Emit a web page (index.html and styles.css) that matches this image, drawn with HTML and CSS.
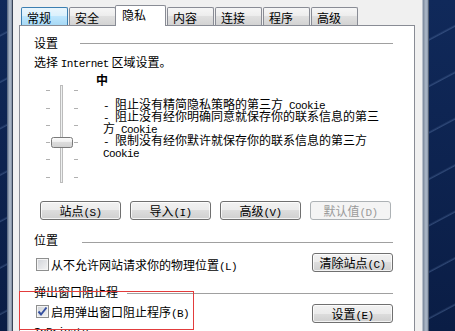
FILE: index.html
```html
<!DOCTYPE html>
<html lang="zh-CN">
<head>
  <meta charset="UTF-8" />
  <meta name="viewport" content="width=device-width, initial-scale=1.0" />
  <title>Internet 选项 - 隐私</title>
  <link rel="stylesheet" href="styles.css">
</head>
<body>

  <div class="frame">
    <div class="client">

      <div class="tabs">
        <div class="tab hot">常规</div>
        <div class="tab">安全</div>
        <div class="tab active">隐私</div>
        <div class="tab">内容</div>
        <div class="tab">连接</div>
        <div class="tab">程序</div>
        <div class="tab">高级</div>
      </div>

      <div class="pane">
        <div class="group g-set"><span>设置</span><i class="rule"></i></div>
        <p class="hint">选择 <span class="lat">Internet</span> 区域设置。</p>
        <div class="level">中</div>

        <div class="privacy">
          <svg class="slider" width="36" height="98" viewBox="0 0 36 98">
            <defs>
              <linearGradient id="thumb" x1="0" y1="0" x2="0" y2="1">
                <stop offset="0" stop-color="#fdfdfd"/>
                <stop offset="0.5" stop-color="#ececec"/>
                <stop offset="0.5" stop-color="#dcdcdc"/>
                <stop offset="1" stop-color="#d0d0d0"/>
              </linearGradient>
            </defs>
            <rect x="16.5" y="0.5" width="2" height="97" fill="#eef0f0" stroke="#bcbcbc"/>
            <g stroke="#b0b0b0">
              <line x1="2" y1="5.5" x2="6" y2="5.5"/><line x1="30" y1="5.5" x2="34" y2="5.5"/>
              <line x1="2" y1="23.5" x2="6" y2="23.5"/><line x1="30" y1="23.5" x2="34" y2="23.5"/>
              <line x1="2" y1="40.5" x2="6" y2="40.5"/><line x1="30" y1="40.5" x2="34" y2="40.5"/>
              <line x1="2" y1="57.5" x2="6" y2="57.5"/><line x1="30" y1="57.5" x2="34" y2="57.5"/>
              <line x1="2" y1="74.5" x2="6" y2="74.5"/><line x1="30" y1="74.5" x2="34" y2="74.5"/>
              <line x1="2" y1="92.5" x2="6" y2="92.5"/><line x1="30" y1="92.5" x2="34" y2="92.5"/>
            </g>
            <rect x="7.5" y="52.5" width="21" height="10" rx="2" fill="url(#thumb)" stroke="#7a7a7a"/>
          </svg>
          <p class="desc"><span class="lat">- </span>阻止没有精简隐私策略的第三方<span class="lat"> Cookie</span><br><span class="lat">- </span>阻止没有经你明确同意就保存你的联系信息的第三方<span class="lat"> Cookie</span><br><span class="lat">- </span>限制没有经你默许就保存你的联系信息的第三方<span class="lat"> Cookie</span></p>
        </div>

        <div class="btn-row">
          <button>站点<span class="lat">(S)</span></button>
          <button>导入<span class="lat">(I)</span></button>
          <button>高级<span class="lat">(V)</span></button>
          <button disabled>默认值<span class="lat">(D)</span></button>
        </div>

        <div class="group g-loc"><span>位置</span><i class="rule"></i></div>
        <div class="row r-loc">
          <label class="check"><span class="box"></span>从不允许网站请求你的物理位置<span class="lat">(L)</span></label>
          <button>清除站点<span class="lat">(C)</span></button>
        </div>

        <div class="group g-pop"><span>弹出窗口阻止程</span><i class="rule"></i></div>
        <div class="row r-pop">
          <label class="check"><span class="box"><svg width="11" height="11" viewBox="0 0 11 11"><path d="M1.5 5.5 L4 8.5 L9.5 1.5" fill="none" stroke="#3550a0" stroke-width="2"/></svg></span>启用弹出窗口阻止程序<span class="lat">(B)</span></label>
          <button>设置<span class="lat">(E)</span></button>
        </div>

        <div class="group g-inp"><span class="name">InPrivate</span><i class="rule"></i></div>

        <div class="mark"></div>
      </div>

    </div>
  </div>

</body>
</html>
```

FILE: styles.css
```css
body {
  margin: 0;
  width: 455px;
  height: 331px;
  overflow: hidden;
  display: flex;
  font-family: "Noto Sans CJK SC", sans-serif;
  font-size: 12px;
  color: #000;
  background:
    repeating-linear-gradient(-28deg, transparent 0 22px, rgba(110,140,190,.35) 23px, transparent 25px, transparent 41px),
    linear-gradient(#10295a, #0a1d45);
}

/* latin parts drawn as half-width mono, like the system font */
.lat,
.name {
  font-family: "Liberation Mono", monospace;
  font-size: 11px;
  letter-spacing: -0.6px;
}

.lat {
  line-height: 0;
}

/* window frame */
.frame {
  margin-left: 7px;
  width: 422px;
  height: 331px;
  box-sizing: border-box;
  padding: 0 6px 0 5px;
  display: flex;
  background:
    linear-gradient(to right, #4f5f78, #9aa7ba 40%, #b4bfcd 60%, #7d8ba0) left / 5px 100% no-repeat,
    linear-gradient(to right, #7a879b, #b0bccb 50%, #8e9bb0 80%, #2a3548) right / 6px 100% no-repeat;
}

.client {
  flex: 1;
  background: #f0f0f0;
  border-left: 1px solid #3a4556;
  border-right: 1px solid #b9c0ca;
}

/* tabs */
.tabs {
  display: flex;
  align-items: flex-end;
  height: 20px;
  padding: 5px 0 0 8px;
}

.tab {
  width: 47px;
  height: 18px;
  box-sizing: border-box;
  margin-left: 1px;
  padding: 3px 0 0 5px;
  line-height: 13px;
  border: 1px solid #898c95;
  border-bottom: 0;
  border-radius: 2px 2px 0 0;
  background: linear-gradient(#f6f6f6, #ececec 50%, #dfdfdf 50%, #d3d3d3);
}

.tab:first-child {
  margin-left: 0;
}

.tab.hot {
  border-color: #3c7fb1;
  background: linear-gradient(#eaf6fd, #d9f0fc 50%, #bee6fd 50%, #a7d9f5);
}

.tab.active {
  position: relative;
  z-index: 1;
  width: 51px;
  height: 21px;
  margin: 0 0 -1px -1px;
  padding: 2px 0 0 6px;
  background: #fff;
}

/* tab page */
.pane {
  position: relative;
  margin-left: 6px;
  width: 396px;
  height: 320px;
  box-sizing: border-box;
  padding: 0 21px 0 14px;
  border: 1px solid #898c95;
  background: #fff;
}

.group {
  display: flex;
  align-items: flex-start;
  height: 12px;
  line-height: 12px;
  white-space: nowrap;
}

.rule {
  flex: 1;
  height: 1px;
  background: #a0a0a0;
}

.g-set { margin-top: 11px; }
.g-set .rule { margin: 6px 0 0 22px; }
.g-loc { margin-top: 14px; }
.g-loc .rule { margin: 8px 0 0 24px; }
.g-pop { margin-top: 14px; }
.g-pop .rule { margin: 7px 0 0 9px; }
.g-inp { margin-top: 3px; }
.g-inp .rule { margin: 7px 0 0 20px; }

.hint {
  margin: 7px 0 0;
  line-height: 12px;
}

.level {
  margin-top: 6px;
  padding-left: 62px;
  line-height: 12px;
  font-weight: bold;
}

.privacy {
  display: flex;
  margin-top: -1px;
}

.slider {
  display: block;
  margin-left: 10px;
}

.desc {
  margin: 13px 0 0 23px;
  width: 282px;
  line-height: 12px;
}

/* buttons */
button {
  width: 81px;
  height: 19px;
  padding: 0;
  font-family: inherit;
  font-size: 12px;
  line-height: 16px;
  color: #000;
  border: 1px solid #707070;
  border-radius: 3px;
  background: linear-gradient(#f2f2f2, #ebebeb 50%, #dddddd 50%, #cfcfcf);
  box-shadow: inset 0 0 0 1px rgba(255,255,255,.75);
}

button:disabled {
  color: #9a9a9a;
  border-color: #adb2b5;
  background: #f4f4f4;
  box-shadow: none;
}

.btn-row {
  display: flex;
  gap: 9px;
  margin-top: 18px;
  padding-left: 6px;
}

.row {
  display: flex;
  justify-content: space-between;
  align-items: flex-start;
}

.r-loc { margin-top: 7px; }
.r-loc .check { margin-top: 5px; }
.r-pop { margin-top: 6px; }
.r-pop .check { margin-top: 1px; }

.check {
  display: block;
  margin-left: 2px;
  line-height: 13px;
}

.box {
  display: inline-block;
  vertical-align: top;
  width: 13px;
  height: 13px;
  margin-right: 2px;
  box-sizing: border-box;
  border: 1px solid #8e8f8f;
  background: linear-gradient(135deg, #d0d3d8, #f4f4f4);
  box-shadow: inset 0 0 0 1px #f4f4f4;
}

.box svg {
  display: block;
}

/* red annotation box */
.mark {
  position: absolute;
  left: -1px;
  top: 265px;
  width: 175px;
  height: 39px;
  box-sizing: border-box;
  border: 1px solid #e23c3c;
}
```
